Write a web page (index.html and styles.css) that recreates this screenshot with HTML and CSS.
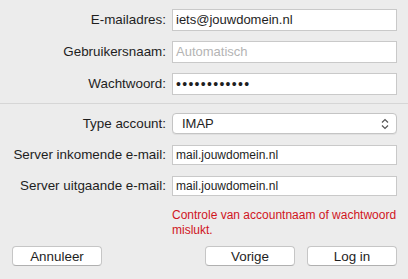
FILE: index.html
```html
<!DOCTYPE html>
<html lang="nl">
<head>
    <meta charset="UTF-8">
    <title>Account toevoegen</title>
    <link rel="stylesheet" href="styles.css">
</head>
<body>
    <div class="sheet">
        <div class="fields">
            <label>E-mailadres:</label>
            <div class="field">iets@jouwdomein.nl</div>

            <label>Gebruikersnaam:</label>
            <div class="field placeholder">Automatisch</div>

            <label>Wachtwoord:</label>
            <div class="field password">••••••••••••</div>
        </div>

        <div class="divider"></div>

        <div class="fields servers">
            <label>Type account:</label>
            <div class="popup">
                <span>IMAP</span>
                <svg width="8" height="12" viewBox="0 0 8 12">
                    <path d="M1 4.5 L4 1.5 L7 4.5 M1 7.5 L4 10.5 L7 7.5" fill="none" stroke="#555" stroke-width="1.2"/>
                </svg>
            </div>

            <label>Server inkomende e-mail:</label>
            <div class="field small">mail.jouwdomein.nl</div>

            <label>Server uitgaande e-mail:</label>
            <div class="field small">mail.jouwdomein.nl</div>
        </div>

        <p class="error">Controle van accountnaam of wachtwoord mislukt.</p>

        <div class="actions">
            <button>Annuleer</button>
            <div class="spacer"></div>
            <button>Vorige</button>
            <button>Log in</button>
        </div>
    </div>
</body>
</html>
```

FILE: styles.css
```css
:root {
    --bg: #ececec;
    --border: #c9c9c9;
    --text: #1e1e1e;
    --muted: #b4b4b4;
    --error: #d0151e;
}

* {
    margin: 0;
    padding: 0;
    box-sizing: border-box;
}

body {
    background-color: var(--bg);
    color: var(--text);
    font-family: 'Liberation Sans', Arial, sans-serif;
    font-size: 13px;
}

.sheet {
    width: 408px;
    height: 279px;
}

.fields {
    display: grid;
    grid-template-columns: 166px 225px;
    column-gap: 6px;
    row-gap: 10px;
    padding-top: 9px;
}

label {
    text-align: right;
    line-height: 22px;
    font-size: 13.4px;
    white-space: nowrap;
}

.field {
    height: 22px;
    line-height: 20px;
    background-color: #fff;
    border: 1px solid var(--border);
    padding: 0 3px;
    white-space: nowrap;
}

.placeholder {
    color: var(--muted);
}

.password {
    font-size: 14px;
    letter-spacing: 1.3px;
}

.divider {
    margin-top: 8px;
    border-top: 1px solid #d6d6d6;
}

.servers {
    row-gap: 11px;
}

.servers label {
    line-height: 20px;
}

.servers .field {
    height: 20px;
    line-height: 18px;
}

.small {
    font-size: 12px;
}

.popup {
    height: 21px;
    display: flex;
    align-items: center;
    justify-content: space-between;
    background-color: #fff;
    border: 1px solid #c4c4c4;
    border-radius: 4px;
    padding: 0 7px 0 9px;
    box-shadow: 0 1px 0 rgba(0, 0, 0, 0.05);
}

.servers label:first-of-type {
    line-height: 21px;
}

.error {
    margin: 12px 0 0 172px;
    width: 230px;
    color: var(--error);
    font-size: 12px;
    line-height: 15px;
}

.actions {
    display: flex;
    gap: 12px;
    margin-top: 8px;
    padding: 0 11px 0 12px;
}

.spacer {
    flex: 1;
}

button {
    width: 90px;
    height: 20px;
    background-color: #fff;
    border: 1px solid #c6c6c6;
    border-bottom-color: #b0b0b0;
    border-radius: 4px;
    font-family: inherit;
    font-size: 13.4px;
    color: var(--text);
}
```
